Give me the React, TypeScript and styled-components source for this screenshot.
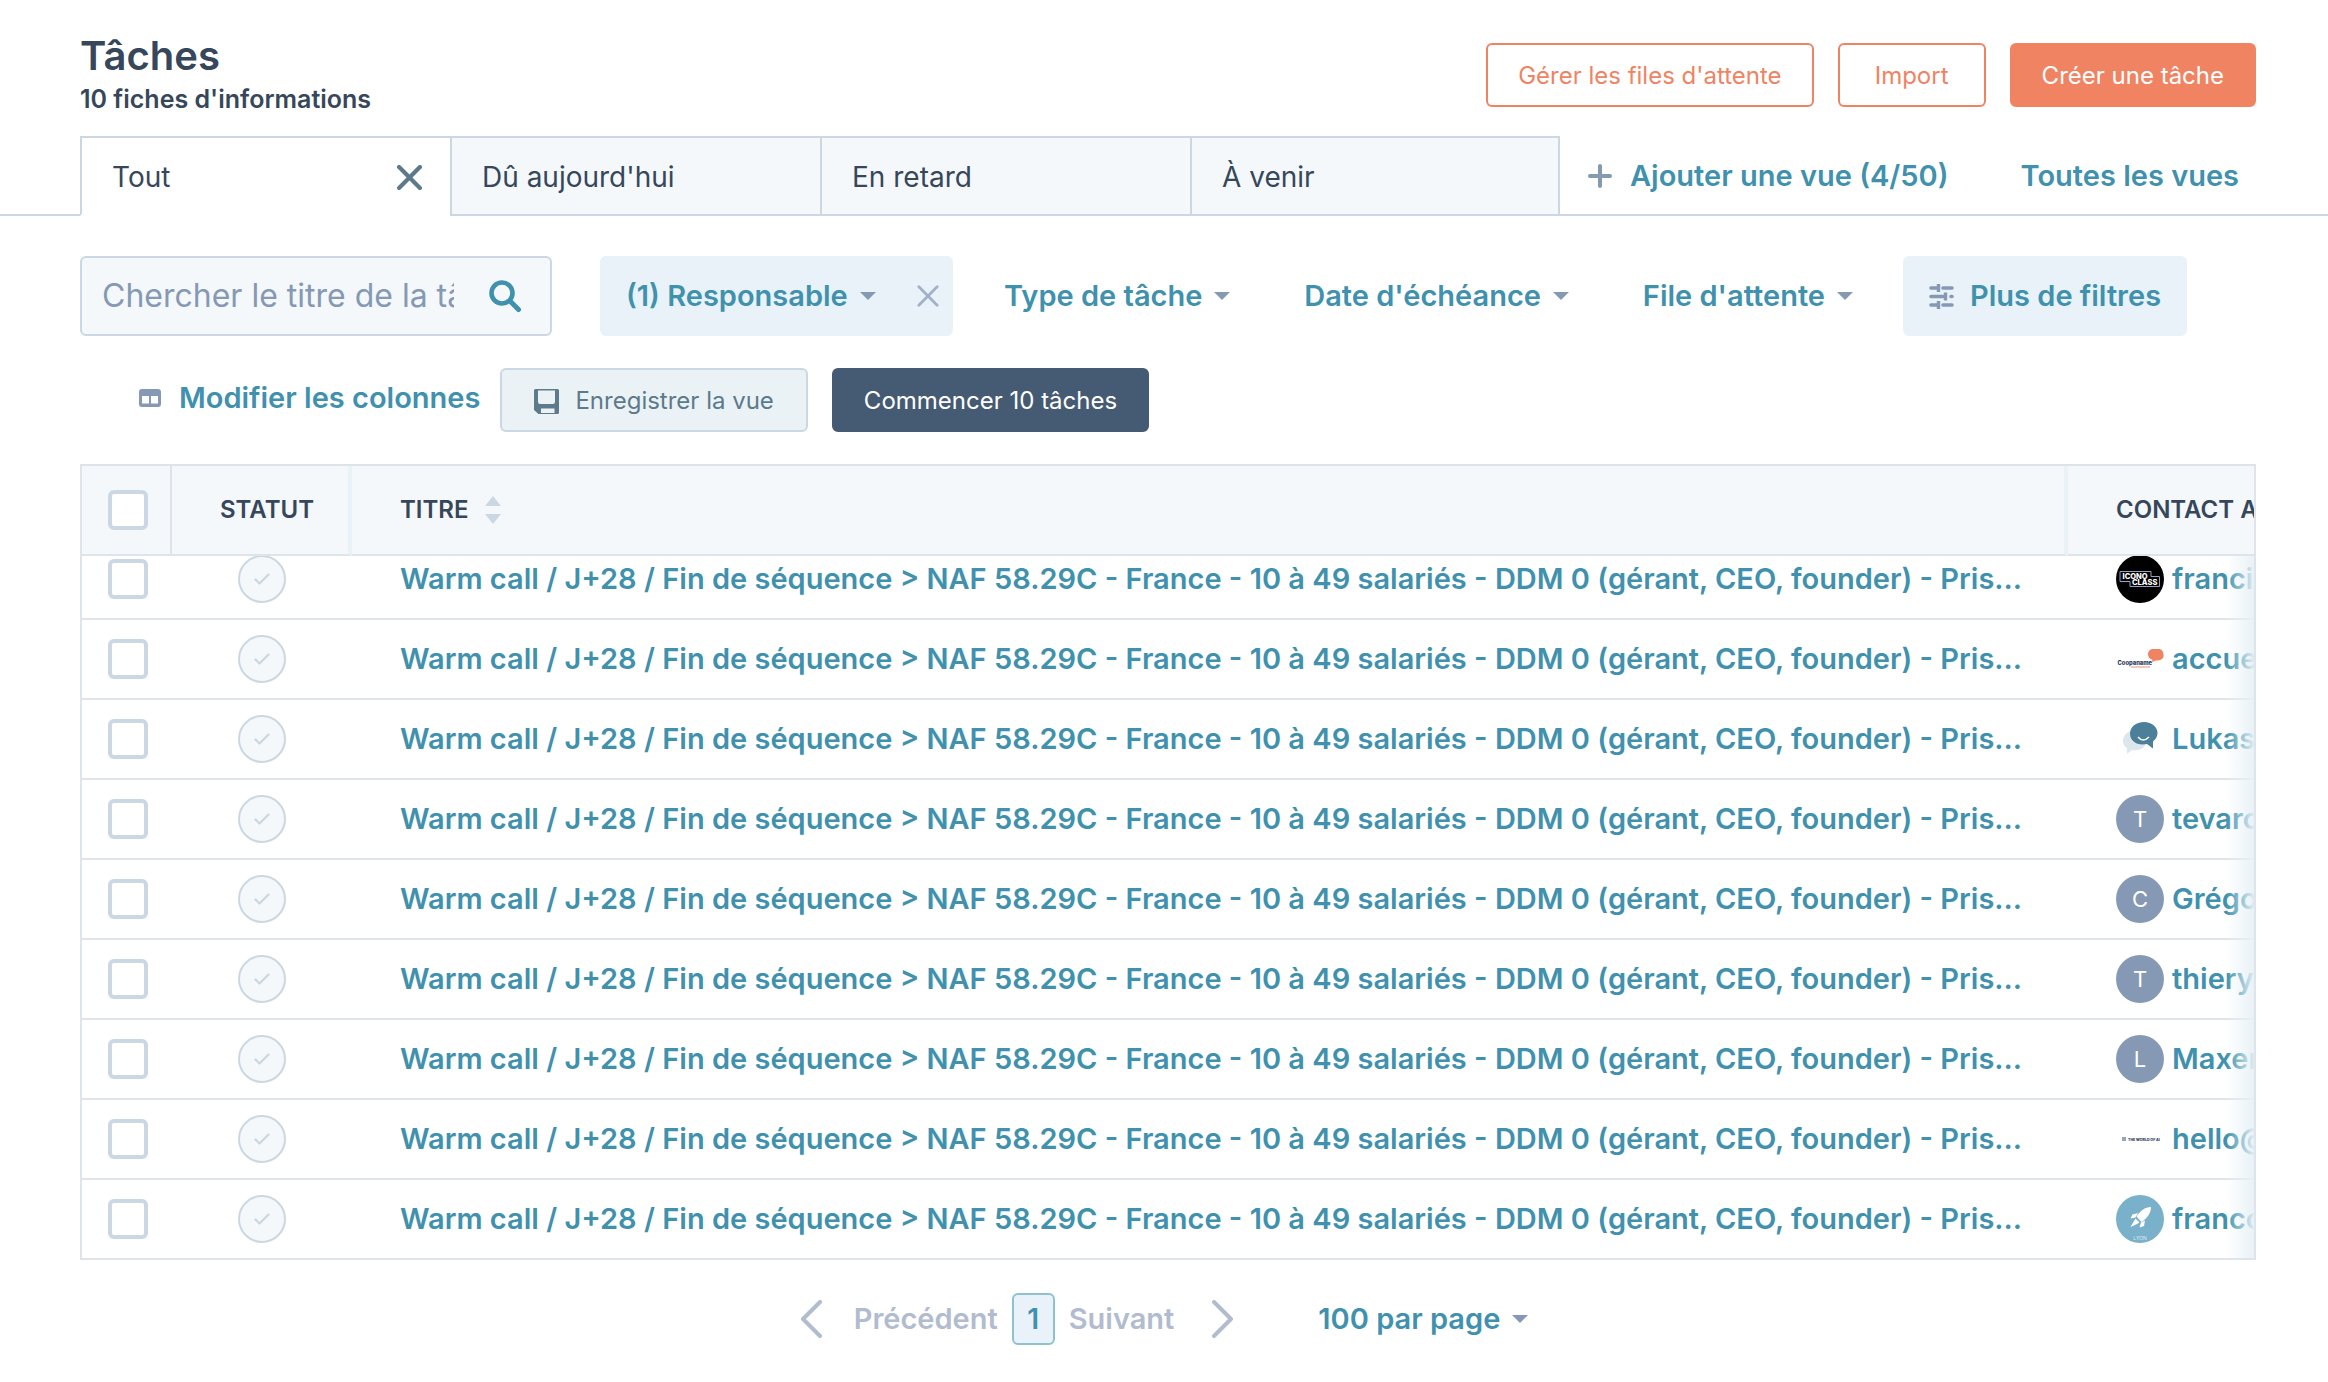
import React, { useLayoutEffect, useRef } from "react";
import styled, { createGlobalStyle, css } from "styled-components";

const color = {
  text: "#36475b",
  link: "#3f91ae",
  orange: "#f08362",
  navy: "#455a73",
  slate: "#5c7a8c",
  muted: "#8599b5",
  disabled: "#b1bccf",
  line: "#cbd7e2",
  tableLine: "#dfe4ea",
  soft: "#f4f8fb",
  tint: "#e9f2f8",
};

const GlobalStyle = createGlobalStyle`
  *, *::before, *::after { box-sizing: border-box; }
  body {
    margin: 0;
    background: #fff;
    color: ${color.text};
    font-family: Inter, "Open Sans", sans-serif;
    font-size: 28px;
    line-height: 40px;
  }
  button, input, select { font: inherit; color: inherit; }
  a { color: ${color.link}; text-decoration: none; }
`;

const Page = styled.div`
  display: flex;
  flex-direction: column;
  height: 100vh;
  min-height: 900px;
`;

const Header = styled.header`
  display: flex;
  justify-content: space-between;
  align-items: flex-start;
  height: 136px;
  flex: none;
  padding: 32px 72px 0 80px;
`;

const Title = styled.h1`
  margin: 0;
  font-size: 40px;
  line-height: 48px;
  font-weight: 600;
`;

const Count = styled.p`
  margin: 4px 0 0;
  font-size: 25px;
  line-height: 30px;
  font-weight: 600;
`;

const ButtonGroup = styled.div`
  display: flex;
  gap: 24px;
`;

const Actions = styled(ButtonGroup)`
  padding-top: 11px;
`;

type Variant = "outline" | "primary" | "dark" | "light";
const variants = {
  outline: css`background: #fff; color: ${color.orange}; border-color: ${color.orange};`,
  primary: css`background: ${color.orange}; color: #fff; border-color: ${color.orange};`,
  dark: css`background: ${color.navy}; color: #fff; border-color: ${color.navy};`,
  light: css`background: #eaf2f6; color: ${color.slate}; border-color: ${color.line}; padding: 2px 32px 0;`,
};

const Button = styled.button<{ $variant: Variant }>`
  display: flex;
  align-items: center;
  justify-content: center;
  gap: 16px;
  height: 64px;
  min-width: 148px;
  padding: 2px 30px 0;
  border: 2px solid;
  border-radius: 6px;
  font-size: 24px;
  line-height: 32px;
  white-space: nowrap;
  ${(p) => variants[p.$variant]}
`;

const Tabs = styled.nav`
  display: flex;
  flex: none;
  height: 80px;
  padding-left: 80px;
  box-shadow: inset 0 -2px ${color.line};
`;

const Tab = styled.div<{ $active?: boolean; $last?: boolean }>`
  display: flex;
  align-items: center;
  justify-content: space-between;
  flex: 0 1 370px;
  padding: 2px 28px 0 30px;
  border: 2px solid ${color.line};
  border-right-width: ${(p) => (p.$last ? "2px" : "0")};
  border-bottom-color: ${(p) => (p.$active ? "#fff" : color.line)};
  background: ${(p) => (p.$active ? "#fff" : color.soft)};
`;

const linkText = css<{ $gap?: number }>`
  display: flex;
  align-items: center;
  gap: ${(p) => p.$gap ?? 12}px;
  color: ${color.link};
  font-size: 29px;
  font-weight: 600;
  white-space: nowrap;
`;

const PlainButton = styled.button<{ $gap?: number }>`
  ${linkText}
  padding: 0;
  border: 0;
  background: none;
`;

const NavLink = styled.a<{ $gap?: number }>`
  ${linkText}
`;

const TabButton = styled(PlainButton)`
  color: ${color.text};
  font-size: 28px;
  font-weight: 400;
`;

const TabLinks = styled.div`
  display: flex;
  align-items: center;
  gap: 72px;
  padding-left: 28px;
`;

const Filters = styled.div`
  display: flex;
  align-items: center;
  flex: none;
  padding: 40px 72px 32px 80px;
`;

const Search = styled.label`
  display: flex;
  align-items: center;
  gap: 34px;
  width: 472px;
  height: 80px;
  padding: 0 28px 0 20px;
  border: 2px solid ${color.line};
  border-radius: 6px;
  background: ${color.soft};
`;

const SearchInput = styled.input`
  flex: 1;
  min-width: 0;
  padding: 0;
  border: 0;
  outline: 0;
  background: none;
  font-size: 32px;
  &::placeholder { color: ${color.muted}; opacity: 1; }
`;

const Chip = styled.div`
  display: flex;
  align-items: center;
  justify-content: space-between;
  height: 80px;
  padding: 0 26px;
  border-radius: 6px;
  background: ${color.tint};
`;

const ActiveFilter = styled(Chip)`
  width: 353px;
  margin-left: 48px;
  padding-right: 14px;
`;

const FilterMenus = styled.div`
  display: flex;
  justify-content: space-between;
  width: 849px;
  margin: 0 50px 0 51px;
`;

const Toolbar = styled.div`
  display: flex;
  flex: none;
  gap: 20px;
  padding: 0 72px 32px 139px;
`;

const ColumnsButton = styled(PlainButton)`
  height: 60px;
`;

const TableFrame = styled.section`
  position: relative;
  flex: 1;
  min-height: 0;
  margin: 0 72px 0 80px;
  border: 2px solid ${color.tableLine};
`;

const Scroller = styled.div`
  height: 100%;
  overflow: auto;
  scrollbar-width: none;
`;

const EdgeFade = styled.div`
  position: absolute;
  top: 90px;
  right: 0;
  bottom: 0;
  width: 28px;
  background: linear-gradient(to right, rgba(233, 242, 247, 0), rgba(231, 241, 246, 0.95));
  pointer-events: none;
`;

const Table = styled.table`
  width: 100%;
  table-layout: fixed;
  border-collapse: separate;
  border-spacing: 0;
`;

const Col = styled.col<{ $width?: number }>`
  width: ${(p) => (p.$width ? `${p.$width}px` : "auto")};
`;

const HeadCell = styled.th<{ $divider?: string; $size?: number }>`
  position: sticky;
  top: 0;
  z-index: 1;
  height: 90px;
  padding: 0 0 0 48px;
  overflow: hidden;
  border-bottom: 2px solid ${color.tableLine};
  border-right: ${(p) => p.$size ?? 0}px solid ${(p) => p.$divider ?? "transparent"};
  background: ${color.soft};
  font-size: 24px;
  line-height: 32px;
  font-weight: 600;
  text-align: left;
  white-space: nowrap;
`;

const CheckHead = styled(HeadCell)`
  padding: 0 0 0 26px;
`;

const HeadLabel = styled.span`
  display: flex;
  align-items: center;
  gap: 16px;
`;

const Cell = styled.td`
  height: 80px;
  padding: 0 0 0 48px;
  overflow: hidden;
  border-bottom: 2px solid ${color.tableLine};
  font-size: 29px;
  white-space: nowrap;
  tr:last-child > & {
    height: 78px;
    border-bottom: 0;
  }
`;

const CheckCell = styled(Cell)`
  padding: 0 0 0 26px;
`;

const StatusCell = styled(Cell)`
  padding: 0 0 0 66px;
`;

const Checkbox = styled.input`
  display: block;
  appearance: none;
  width: 40px;
  height: 40px;
  margin: 0;
  border: 4px solid ${color.line};
  border-radius: 6px;
  background: #fff;
`;

const StatusButton = styled.button`
  display: grid;
  place-items: center;
  width: 48px;
  height: 48px;
  padding: 0;
  border: 2px solid ${color.line};
  border-radius: 50%;
  background: ${color.soft};
`;

const TaskLink = styled.a`
  font-weight: 600;
`;

const Contact = styled.a`
  display: flex;
  align-items: center;
  gap: 8px;
  font-weight: 600;
`;

const Avatar = styled.span<{ $bg?: string }>`
  display: grid;
  place-items: center;
  flex: none;
  width: 48px;
  height: 48px;
  overflow: hidden;
  border-radius: 50%;
  background: ${(p) => p.$bg ?? "transparent"};
  color: #fff;
  font-size: 22px;
  font-weight: 400;
`;

const Footer = styled.footer`
  display: flex;
  align-items: center;
  justify-content: center;
  flex: none;
  height: 122px;
  padding-bottom: 4px;
  gap: 84px;
`;

const Pager = styled.nav`
  display: flex;
  align-items: center;
  gap: 14px;
`;

const PagerButton = styled(PlainButton)`
  color: ${color.disabled};
`;

const CurrentPage = styled.button`
  width: 43px;
  height: 52px;
  padding: 0;
  border: 2px solid #8fc1d1;
  border-radius: 6px;
  background: ${color.tint};
  color: ${color.link};
  font-weight: 600;
`;

const Cross = ({ size, stroke, width }: { size: number; stroke: string; width: number }) => (
  <svg width={size} height={size} viewBox="0 0 24 24" fill="none" stroke={stroke} strokeWidth={width} strokeLinecap="round">
    <path d="M2 2L22 22M22 2L2 22" />
  </svg>
);

const Caret = () => (
  <svg width="16" height="8" viewBox="0 0 16 8" fill={color.muted}>
    <path d="M0 0H16L8 8Z" />
  </svg>
);

const PlusIcon = () => (
  <svg width="24" height="24" viewBox="0 0 24 24" stroke={color.muted} strokeWidth="4" strokeLinecap="round">
    <path d="M12 2V22M2 12H22" />
  </svg>
);

const SearchIcon = () => (
  <svg width="34" height="34" viewBox="0 0 34 34" fill="none" stroke={color.link} strokeLinecap="round">
    <circle cx="14" cy="14" r="10.5" strokeWidth="4.6" />
    <path d="M22 22L30.5 30.5" strokeWidth="5" />
  </svg>
);

const SlidersIcon = () => (
  <svg width="25" height="25" viewBox="0 0 25 25" fill="none" stroke={color.muted} strokeWidth="3.6" strokeLinecap="round">
    <path d="M2 4H8M14 4H23M2 12.5H14M22 12.5H23M2 21H8M14 21H23" />
    <path d="M9.5 0V8M16.5 8.5V16.5M9.5 17V25" strokeWidth="3.4" strokeLinecap="butt" />
  </svg>
);

const ColumnsIcon = () => (
  <svg width="22" height="18" viewBox="0 0 22 18">
    <path fillRule="evenodd" fill={color.muted} d="M3 0H19Q22 0 22 3V15Q22 18 19 18H3Q0 18 0 15V3Q0 0 3 0ZM3 7V14.5H10V7ZM12 7V14.5H19V7Z" />
  </svg>
);

const SaveIcon = () => (
  <svg width="25" height="25" viewBox="0 0 25 25">
    <path fillRule="evenodd" fill={color.slate} d="M0 1.5Q0 0 1.5 0H23.5Q25 0 25 1.5V23.5Q25 25 23.5 25H4.5L0 21ZM4 1.5V13Q4 15 6 15H19Q21 15 21 13V1.5ZM7 19.5V24H20.5V19.5Z" />
  </svg>
);

const SortIcon = () => (
  <svg width="16" height="28" viewBox="0 0 16 28" fill={color.line}>
    <path d="M0 10L8 0L16 10ZM0 18H16L8 28Z" />
  </svg>
);

const CheckIcon = () => (
  <svg width="16" height="12" viewBox="0 0 16 12" fill="none" stroke={color.line} strokeWidth="2.4" strokeLinecap="round" strokeLinejoin="round">
    <path d="M1.5 6.5L5.5 10.5L14.5 1.5" />
  </svg>
);

const Chevron = ({ flip }: { flip?: boolean }) => (
  <svg width="22" height="38" viewBox="0 0 22 38" fill="none" stroke={color.disabled} strokeWidth="4" strokeLinecap="round" strokeLinejoin="round">
    <path d={flip ? "M2 2L19 19L2 36" : "M20 2L3 19L20 36"} />
  </svg>
);

const IconoclassLogo = () => (
  <svg width="48" height="48" viewBox="0 0 48 48">
    <path d="M4 16.5H35V21.5H43.5V31.5H14V26.5H4Z" fill="none" stroke="#8fa3c8" strokeWidth="1" />
    <text x="6.5" y="23.5" fontSize="7.5" fontWeight="800" fill="#fff">ICONO</text>
    <text x="16" y="29.5" fontSize="7.5" fontWeight="800" fill="#fff">CLASS</text>
  </svg>
);

const CoopanameLogo = () => (
  <svg width="48" height="48" viewBox="0 0 48 48">
    <path d="M38 14H42C46 14 48 16.5 48 19.5C48 23.5 45 25.5 40 25.5L36 27L36.5 25C33 23.5 32 21.5 32 19.5C32 16 34 14 38 14Z" fill={color.orange} />
    <text x="1.5" y="30" fontSize="5.8" fontWeight="800" fill="#26365a">Coopaname</text>
    <path d="M15 32H34" stroke="#f3b5a5" strokeWidth="1.5" />
  </svg>
);

const BubblesLogo = () => (
  <svg width="48" height="48" viewBox="0 0 48 48">
    <path d="M16 16C10 17 7 21 7 26C7 29 8 31 11 33L11 39L16 35C22 36 28 34 30 29Z" fill="#dce7ed" />
    <path d="M28 7C36 7 41.5 12 41.5 18C41.5 21 40 24 37 26.5V33.5L31 29C21 31 14 26 14 18.5C14 12 20 7 28 7Z" fill="#4c7f99" />
    <path d="M22 22Q27 28 33 22" stroke="#fff" strokeWidth="1.5" fill="none" />
  </svg>
);

const WorldOfAiLogo = () => (
  <svg width="48" height="48" viewBox="0 0 48 48">
    <rect x="6" y="22" width="4" height="4" fill="#98a4bd" />
    <text x="12" y="25.5" fontSize="3.6" fontWeight="800" fill="#26365a">THE WORLD OF AI</text>
  </svg>
);

const RocketLogo = () => (
  <svg width="48" height="48" viewBox="0 0 48 48">
    <g fill="#fff">
      <path d="M35 12C29 12 24 16 20.5 21.5L25.5 27C31 23.5 35 18 35 12Z" />
      <path d="M22 18L16.5 19.5L14.5 23.5L19.5 22.5ZM29 25.5L28 31L23.5 32.5L25 27.5Z" />
      <path d="M19.5 23.5L23.5 27.5L21 29L14.5 32L18 26Z" />
    </g>
    <text x="24" y="45" textAnchor="middle" fontSize="5" fill="#d9ecf3">LYON</text>
  </svg>
);

const TASK = "Warm call / J+28 / Fin de séquence > NAF 58.29C - France - 10 à 49 salariés - DDM 0 (gérant, CEO, founder) - Pris...";

const rows: { name: string; bg?: string; avatar: React.ReactNode }[] = [
  { name: "franci", bg: "#000", avatar: <IconoclassLogo /> },
  { name: "accue", avatar: <CoopanameLogo /> },
  { name: "Lukas", avatar: <BubblesLogo /> },
  { name: "tevaro", bg: color.muted, avatar: "T" },
  { name: "Grégo", bg: color.muted, avatar: "C" },
  { name: "thiery", bg: color.muted, avatar: "T" },
  { name: "Maxen", bg: color.muted, avatar: "L" },
  { name: "hello@", avatar: <WorldOfAiLogo /> },
  { name: "franco", bg: "#79b1cb", avatar: <RocketLogo /> },
];

export default function App() {
  const scroller = useRef<HTMLDivElement>(null);
  // The list opens scrolled to its last task.
  useLayoutEffect(() => {
    if (scroller.current) scroller.current.scrollTop = scroller.current.scrollHeight;
  }, []);

  return (
    <Page>
      <GlobalStyle />
      <Header>
        <div>
          <Title>Tâches</Title>
          <Count>10 fiches d'informations</Count>
        </div>
        <Actions>
          <Button $variant="outline">Gérer les files d'attente</Button>
          <Button $variant="outline">Import</Button>
          <Button $variant="primary">Créer une tâche</Button>
        </Actions>
      </Header>

      <Tabs>
        <Tab $active>
          <TabButton>Tout</TabButton>
          <PlainButton aria-label="Fermer la vue"><Cross size={25} stroke={color.slate} width={4} /></PlainButton>
        </Tab>
        <Tab><TabButton>Dû aujourd'hui</TabButton></Tab>
        <Tab><TabButton>En retard</TabButton></Tab>
        <Tab $last><TabButton>À venir</TabButton></Tab>
        <TabLinks>
          <PlainButton $gap={18}><PlusIcon />Ajouter une vue (4/50)</PlainButton>
          <NavLink href="#vues">Toutes les vues</NavLink>
        </TabLinks>
      </Tabs>

      <Filters>
        <Search>
          <SearchInput type="text" aria-label="Chercher le titre de la tâche" placeholder="Chercher le titre de la tâche" />
          <SearchIcon />
        </Search>
        <ActiveFilter>
          <PlainButton>(1) Responsable<Caret /></PlainButton>
          <PlainButton aria-label="Effacer le filtre"><Cross size={22} stroke="#a3b1c8" width={3} /></PlainButton>
        </ActiveFilter>
        <FilterMenus>
          <PlainButton>Type de tâche<Caret /></PlainButton>
          <PlainButton>Date d'échéance<Caret /></PlainButton>
          <PlainButton>File d'attente<Caret /></PlainButton>
        </FilterMenus>
        <Chip>
          <PlainButton $gap={16}><SlidersIcon />Plus de filtres</PlainButton>
        </Chip>
      </Filters>

      <Toolbar>
        <ColumnsButton $gap={18}><ColumnsIcon />Modifier les colonnes</ColumnsButton>
        <ButtonGroup>
          <Button $variant="light"><SaveIcon />Enregistrer la vue</Button>
          <Button $variant="dark">Commencer 10 tâches</Button>
        </ButtonGroup>
      </Toolbar>

      <TableFrame>
        <Scroller ref={scroller}>
          <Table>
            <colgroup>
              <Col $width={90} />
              <Col $width={180} />
              <Col />
              <Col $width={186} />
            </colgroup>
            <thead>
              <tr>
                <CheckHead $size={2} $divider={color.tableLine}><Checkbox type="checkbox" aria-label="Tout sélectionner" /></CheckHead>
                <HeadCell $size={4} $divider="#e9f2f7">STATUT</HeadCell>
                <HeadCell $size={4} $divider="#e9f2f7"><HeadLabel>TITRE<SortIcon /></HeadLabel></HeadCell>
                <HeadCell>CONTACT A</HeadCell>
              </tr>
            </thead>
            <tbody>
              {rows.map((row) => (
                <tr key={row.name}>
                  <CheckCell><Checkbox type="checkbox" aria-label={row.name} /></CheckCell>
                  <StatusCell><StatusButton aria-label="Terminer"><CheckIcon /></StatusButton></StatusCell>
                  <Cell><TaskLink href="#tache">{TASK}</TaskLink></Cell>
                  <Cell>
                    <Contact href="#contact">
                      <Avatar $bg={row.bg}>{row.avatar}</Avatar>
                      {row.name}
                    </Contact>
                  </Cell>
                </tr>
              ))}
            </tbody>
          </Table>
        </Scroller>
        <EdgeFade />
      </TableFrame>

      <Footer>
        <Pager aria-label="Pagination">
          <PagerButton $gap={32}><Chevron />Précédent</PagerButton>
          <CurrentPage>1</CurrentPage>
          <PagerButton $gap={38}>Suivant<Chevron flip /></PagerButton>
        </Pager>
        <PlainButton>100 par page<Caret /></PlainButton>
      </Footer>
    </Page>
  );
}
